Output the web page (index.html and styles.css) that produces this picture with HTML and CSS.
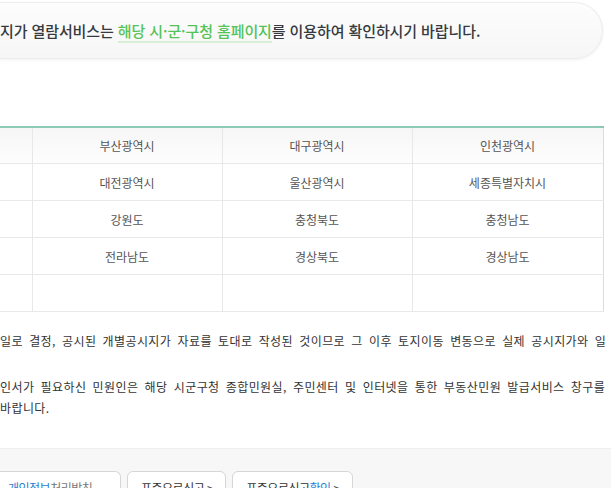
FILE: index.html
```html
<!DOCTYPE html>
<html lang="ko">
<head>
  <meta charset="UTF-8">
  <title>개별공시지가 열람</title>
  <meta name="viewport" content="width=device-width, initial-scale=1.0">
  <link rel="stylesheet" href="styles.css">
</head>
<body>

  <div class="notice">
    <p>지가 열람서비스는 <a href="#" class="link-green">해당 시·군·구청 홈페이지</a>를 이용하여 확인하시기 바랍니다.</p>
  </div>

  <table class="sido">
    <colgroup>
      <col class="c1"><col class="c2"><col class="c3"><col class="c4">
    </colgroup>
    <tr class="first">
      <td></td><td>부산광역시</td><td>대구광역시</td><td>인천광역시</td>
    </tr>
    <tr>
      <td></td><td>대전광역시</td><td>울산광역시</td><td>세종특별자치시</td>
    </tr>
    <tr>
      <td></td><td>강원도</td><td>충청북도</td><td>충청남도</td>
    </tr>
    <tr>
      <td></td><td>전라남도</td><td>경상북도</td><td>경상남도</td>
    </tr>
    <tr>
      <td></td><td></td><td></td><td></td>
    </tr>
  </table>

  <div class="guide">
    <p>일로 결정, 공시된 개별공시지가 자료를 토대로 작성된 것이므로 그 이후 토지이동 변동으로 실제 공시지가와 일</p>
    <p class="second">인서가 필요하신 민원인은 해당 시군구청 종합민원실, 주민센터 및 인터넷을 통한 부동산민원 발급서비스 창구를<br>바랍니다.</p>
  </div>

  <footer>
    <div class="links">
      <a href="#" class="btn first-btn"><span class="blue">개인정보</span><span class="gray">처리방침</span></a>
      <a href="#" class="btn">표준으로신고 &gt;</a>
      <a href="#" class="btn">표준으로신고<span class="blue">확인</span> &gt;</a>
    </div>
  </footer>

</body>
</html>
```

FILE: styles.css
```css
body {
  margin: 0;
  font-family: "Noto Sans CJK KR", "Noto Sans", sans-serif;
  background: #fff;
  color: #333;
  overflow: hidden;
}
.notice {
  width: 603px;
  height: 57px;
  margin-top: 2px;
  box-sizing: border-box;
  display: flex;
  align-items: center;
  background: linear-gradient(#fdfdfd, #f6f6f6);
  border: 1px solid #ececec;
  border-left: none;
  border-radius: 0 29px 29px 0;
  box-shadow: 0 1px 3px rgba(0,0,0,0.06);
}
.notice p {
  margin: 0;
  font-size: 15px;
  font-weight: 500;
  color: #353a40;
  white-space: nowrap;
  letter-spacing: -0.1px;
}
.link-green {
  color: #55c355;
  text-decoration: none;
  border-bottom: 2px solid #d6efd6;
}
.sido {
  width: 603px;
  margin-top: 67px;
  border-collapse: collapse;
  border-top: 2px solid #8ccab4;
  border-bottom: 1px solid #d8d8d8;
  table-layout: fixed;
}
.c1 { width: 32px; }
.c2 { width: 190px; }
.c3 { width: 190px; }
.c4 { width: 191px; }
.sido td {
  height: 36px;
  padding: 0;
  border: 1px solid #e8e8e8;
  text-align: center;
  font-size: 12px;
  color: #555;
}
.sido td:first-child {
  border-left: none;
}
.sido tr:first-child td {
  height: 35px;
  border-top: none;
  background: linear-gradient(#f6f6f6, #fdfdfd);
}
.sido td:last-child {
  border-right: 1px solid #dcdcdc;
}
.guide {
  padding-top: 18px;
  height: 118px;
}
.guide p {
  margin: 0;
  font-size: 12px;
  line-height: 21px;
  color: #333;
  white-space: nowrap;
  letter-spacing: 0.4px;
  word-spacing: 2.5px;
}
.guide .second {
  margin-top: 25px;
}
footer {
  background: #f7f7f7;
  border-top: 1px solid #efefef;
  padding-top: 22px;
  height: 17px;
  overflow: hidden;
}
.links {
  display: flex;
  gap: 6px;
}
.btn {
  display: block;
  background: #fff;
  border: 1px solid #d6d6d6;
  border-radius: 6px;
  padding: 7px 12px 8px 13px;
  font-size: 12px;
  line-height: 18px;
  letter-spacing: -0.5px;
  color: #333;
  text-decoration: none;
  white-space: nowrap;
}
.first-btn {
  border-left: none;
  border-radius: 0 6px 6px 0;
  padding-left: 8px;
  width: 100px;
}
.blue {
  color: #2a7fd4;
}
.gray {
  color: #777;
}
```
